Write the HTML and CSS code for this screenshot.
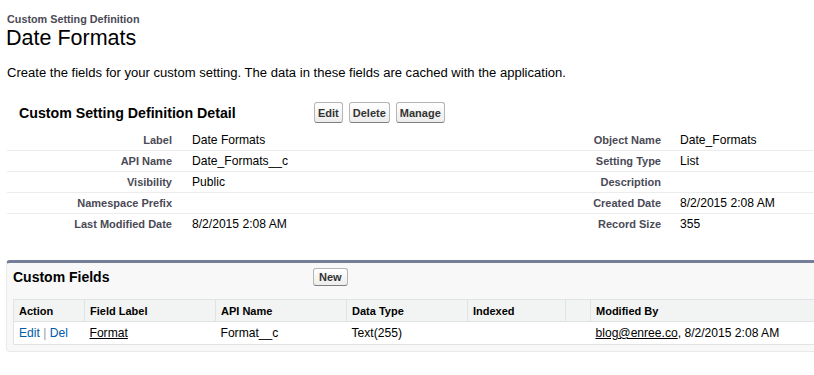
FILE: index.html
```html
<!DOCTYPE html>
<html>
<head>
<meta charset="utf-8">
<link rel="stylesheet" href="styles.css">
</head>
<body>
<div class="page">
  <div class="ptitle">
    <div class="ptype">Custom Setting Definition</div>
    <h1 class="pname">Date Formats</h1>
  </div>
  <p class="desc">Create the fields for your custom setting. The data in these fields are cached with the application.</p>

  <div class="detail">
    <div class="dhead">
      <h2 class="dtitle">Custom Setting Definition Detail</h2>
      <div class="btns">
        <button class="btn">Edit</button>
        <button class="btn">Delete</button>
        <button class="btn">Manage</button>
      </div>
    </div>
    <table class="dtable">
      <colgroup><col class="c1"><col class="c2"><col class="c3"><col class="c4"></colgroup>
      <tr><td class="lbl">Label</td><td class="val">Date Formats</td><td class="lbl">Object Name</td><td class="val">Date_Formats</td></tr>
      <tr><td class="lbl">API Name</td><td class="val">Date_Formats__c</td><td class="lbl">Setting Type</td><td class="val">List</td></tr>
      <tr><td class="lbl">Visibility</td><td class="val">Public</td><td class="lbl">Description</td><td class="val"></td></tr>
      <tr><td class="lbl">Namespace Prefix</td><td class="val"></td><td class="lbl">Created Date</td><td class="val">8/2/2015 2:08 AM</td></tr>
      <tr class="last"><td class="lbl">Last Modified Date</td><td class="val">8/2/2015 2:08 AM</td><td class="lbl">Record Size</td><td class="val">355</td></tr>
    </table>
  </div>

  <div class="panel">
    <div class="phead">
      <h3 class="ptitle2">Custom Fields</h3>
      <button class="btn small">New</button>
    </div>
    <table class="list">
      <colgroup>
        <col class="w1"><col class="w2"><col class="w3"><col class="w4"><col class="w5"><col class="w6"><col class="w7">
      </colgroup>
      <tr class="hrow">
        <th>Action</th><th>Field Label</th><th>API Name</th><th>Data Type</th><th>Indexed</th><th></th><th>Modified By</th>
      </tr>
      <tr class="drow">
        <td><a class="act" href="#">Edit</a><span class="sep"> | </span><a class="act" href="#">Del</a></td>
        <td><a class="ul" href="#">Format</a></td>
        <td>Format__c</td>
        <td>Text(255)</td>
        <td></td>
        <td></td>
        <td><a class="ul" href="#">blog@enree.co</a>, 8/2/2015 2:08 AM</td>
      </tr>
    </table>
  </div>
</div>
</body>
</html>
```

FILE: styles.css
```css
html, body {
  margin: 0;
  padding: 0;
  background: #fff;
  overflow: hidden;
}
body {
  font-family: "Liberation Sans", Arial, sans-serif;
  color: #000;
}
.page {
  padding: 13px 0 0 7px;
  width: 900px;
}
.ptitle { margin: 0; }
.ptype {
  font-size: 10.8px;
  font-weight: bold;
  color: #4a4a56;
  line-height: 13px;
}
.pname {
  margin: 0 0 0 -1px;
  font-size: 21.5px;
  font-weight: normal;
  line-height: 24px;
}
.desc {
  margin: 15px 0 0 0;
  font-size: 13.05px;
  line-height: 16px;
}
.detail {
  margin-top: 21px;
}
.dhead {
  display: flex;
  align-items: center;
  height: 21px;
}
.dtitle {
  margin: 0;
  width: 307px;
  padding-left: 12px;
  box-sizing: border-box;
  font-size: 14.2px;
  font-weight: bold;
}
.btns {
  display: flex;
  gap: 6px;
}
.btn {
  font-family: "Liberation Sans", Arial, sans-serif;
  font-size: 11px;
  font-weight: bold;
  color: #333;
  background: linear-gradient(#ffffff, #ededed);
  border: 1px solid #b5b5b5;
  border-bottom-color: #7f7f7f;
  border-radius: 3px;
  padding: 0 3px;
  height: 21px;
  margin: 0;
  cursor: pointer;
}
.btn.small {
  height: 18px;
  padding: 0 5px;
}
.dtable {
  margin-top: 7px;
  border-collapse: collapse;
  table-layout: fixed;
  width: 820px;
}
.c1 { width: 175px; }
.c2 { width: 314px; }
.c3 { width: 175px; }
.c4 { width: 156px; }
.dtable td {
  height: 20px;
  padding: 0;
  border-bottom: 1px solid #ececec;
  vertical-align: middle;
}
.dtable tr.last td { border-bottom-color: transparent; }
.dtable .lbl {
  text-align: right;
  padding-right: 10px;
  font-size: 11px;
  font-weight: bold;
  color: #4a4a56;
}
.dtable .val {
  padding-left: 10px;
  font-size: 12.1px;
  color: #000;
}
.dtable td.val:last-child { padding-left: 9px; }

.panel {
  margin-top: 25px;
  margin-left: -1px;
  width: 880px;
  background: #f8f8f8;
  border: 1px solid #eaeaea;
  border-top: 3px solid #747e96;
  border-radius: 4px;
  padding: 0 6px 6px 6px;
}
.phead {
  display: flex;
  align-items: center;
  height: 30px;
  padding-bottom: 2px;
  box-sizing: border-box;
}
.ptitle2 {
  margin: 0;
  width: 300px;
  padding-left: 0;
  font-size: 14px;
  font-weight: bold;
}
.list {
  margin-top: 6px;
  border-collapse: collapse;
  table-layout: fixed;
  width: 860px;
  background: #fff;
  border: 1px solid #e0e3e5;
}
.w1 { width: 71px; }
.w2 { width: 131px; }
.w3 { width: 131px; }
.w4 { width: 121px; }
.w5 { width: 98px; }
.w6 { width: 25px; }
.w7 { width: 283px; }
.hrow th {
  background: #f2f3f3;
  font-size: 11px;
  font-weight: bold;
  text-align: left;
  padding: 0 5px;
  height: 21px;
  border: 1px solid #e0e3e5;
  color: #000;
}
.drow td {
  font-size: 12.1px;
  padding: 0 5px;
  height: 22px;
  border-bottom: 1px solid #e3e3e3;
}
.act {
  color: #015ba7;
  text-decoration: none;
}
.sep { color: #999; }
.ul {
  color: #000;
  text-decoration: underline;
}
```
